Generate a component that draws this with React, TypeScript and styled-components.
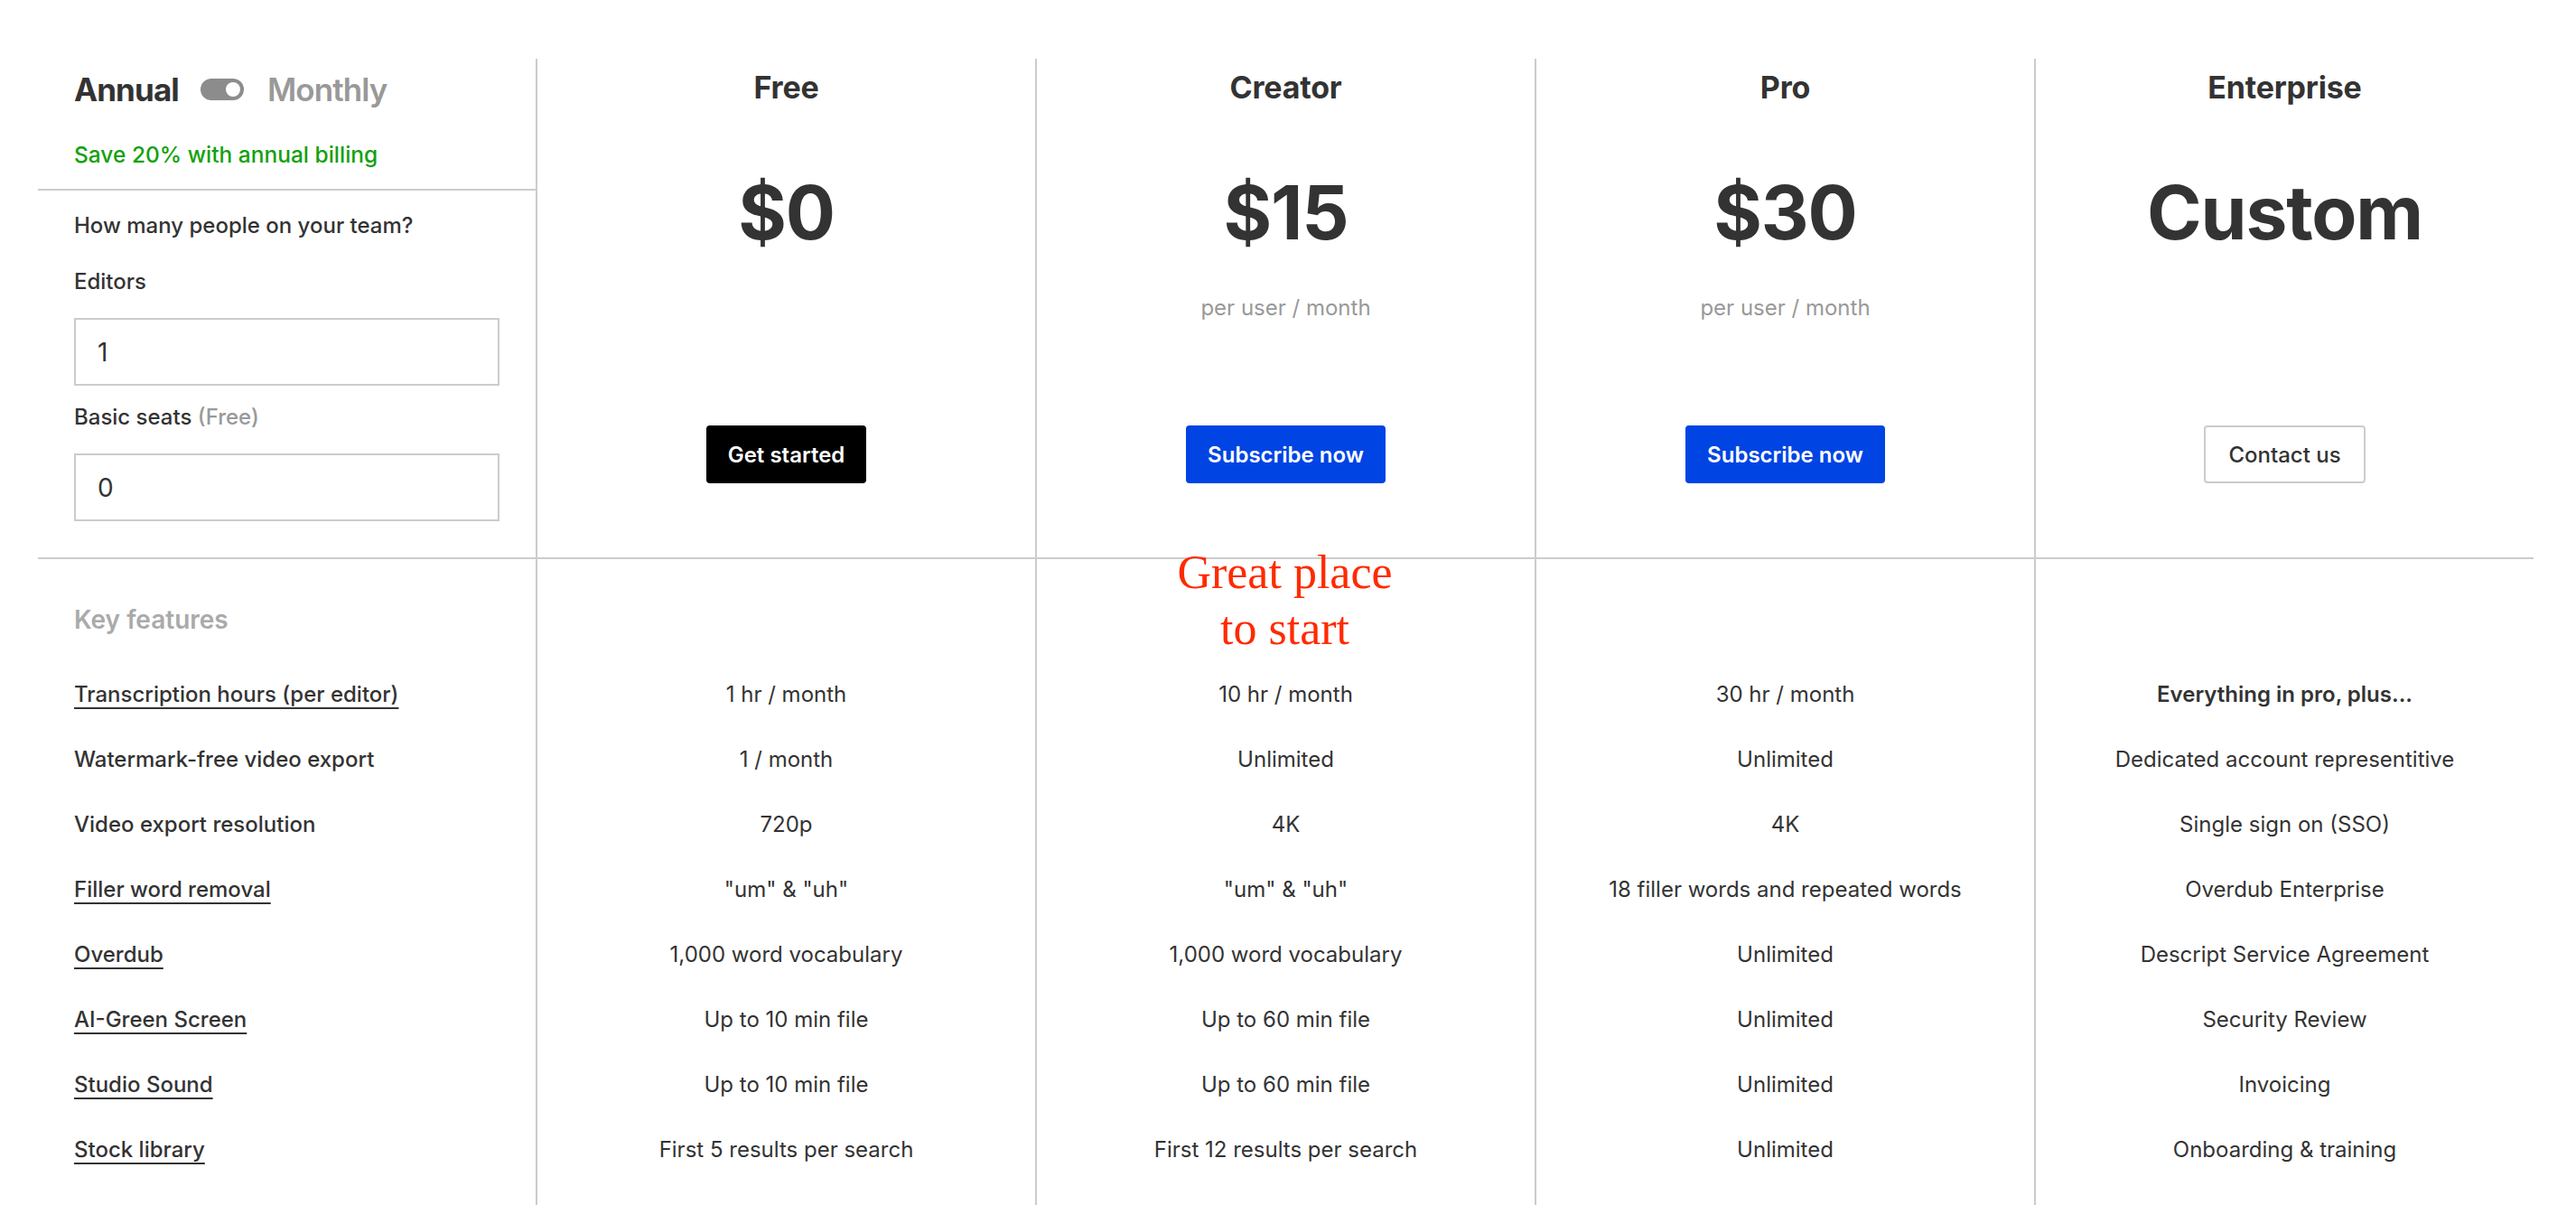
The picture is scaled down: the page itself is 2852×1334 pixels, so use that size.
import React, { useState } from "react";
import styled, { createGlobalStyle } from "styled-components";

const GlobalStyle = createGlobalStyle`
  html, body {
    margin: 0;
    padding: 0;
    background: #fff;
    overflow: hidden;
  }
  body {
    font-family: Inter, "Noto Sans", "Liberation Sans", sans-serif;
    color: #333;
  }
`;

const Page = styled.div`
  padding: 65px 47px 0 42px;
`;

const Table = styled.div`
  display: grid;
  grid-template-columns: 551px repeat(4, 1fr);
`;

// ---- header row ----

const SetupCell = styled.div`
  display: flex;
  flex-direction: column;
  border-bottom: 2px solid #ccc;
`;

const Billing = styled.div`
  padding: 12px 40px 23px;
  border-bottom: 2px solid #ccc;
`;

const BillingSwitch = styled.div`
  display: flex;
  align-items: center;
  gap: 24px;
`;

const Period = styled.span<{ $active?: boolean }>`
  font-size: 35px;
  line-height: 44px;
  font-weight: ${(p) => (p.$active ? 700 : 600)};
  color: ${(p) => (p.$active ? "#333" : "#999")};
  letter-spacing: -0.9px;
`;

const Toggle = styled.button<{ $right: boolean }>`
  position: relative;
  width: 48px;
  height: 24px;
  border: none;
  border-radius: 12px;
  background: #8c8c8c;
  padding: 0;
  margin-right: 2px;
  cursor: pointer;

  &::after {
    content: "";
    position: absolute;
    top: 4px;
    left: ${(p) => (p.$right ? "28px" : "4px")};
    width: 16px;
    height: 16px;
    border-radius: 50%;
    background: #fff;
  }
`;

const SaveNote = styled.div`
  margin-top: 35px;
  font-size: 24.5px;
  line-height: 30px;
  font-weight: 500;
  color: #13a10e;
`;

const Team = styled.div`
  display: flex;
  flex-direction: column;
  padding: 24px 40px 40px;
`;

const Question = styled.div`
  font-size: 24px;
  line-height: 30px;
  font-weight: 500;
  color: #333;
  margin-bottom: 32px;
`;

const FieldLabel = styled.label`
  font-size: 24px;
  line-height: 30px;
  font-weight: 500;
  color: #333;
  margin-bottom: 25px;

  span {
    color: #999;
  }
`;

const SeatInput = styled.input`
  box-sizing: border-box;
  width: 100%;
  height: 75px;
  border: 2px solid #ccc;
  border-radius: 0;
  padding: 0 24px;
  font-family: inherit;
  font-size: 28px;
  color: #333;
  outline: none;
  margin-bottom: 20px;

  &:last-child {
    margin-bottom: 0;
  }
`;

const PlanHead = styled.div`
  display: flex;
  flex-direction: column;
  align-items: center;
  padding: 12px 0 82px;
  border-left: 2px solid #ccc;
  border-bottom: 2px solid #ccc;
`;

const PlanName = styled.h2`
  margin: 0;
  font-size: 34px;
  line-height: 40px;
  font-weight: 700;
  color: #333;
  letter-spacing: -0.2px;
`;

const Price = styled.div`
  margin-top: 71px;
  font-size: 82px;
  line-height: 96px;
  font-weight: 700;
  color: #333;
  letter-spacing: -1.2px;
`;

const PriceNote = styled.div`
  margin-top: 42px;
  height: 30px;
  font-size: 24px;
  line-height: 30px;
  color: #999;
`;

const PlanButton = styled.button<{ $variant: "dark" | "blue" | "outline" }>`
  margin-top: auto;
  height: 64px;
  padding: 0 ${(p) => (p.$variant === "outline" ? "25px" : "24px")};
  border-radius: 4px;
  font-family: inherit;
  font-size: 24px;
  font-weight: ${(p) => (p.$variant === "outline" ? 500 : 600)};
  cursor: pointer;
  border: ${(p) => (p.$variant === "outline" ? "2px solid #ccc" : "none")};
  background: ${(p) =>
    p.$variant === "dark" ? "#000" : p.$variant === "blue" ? "#0044e4" : "#fff"};
  color: ${(p) => (p.$variant === "outline" ? "#333" : "#fff")};
`;

// ---- features ----

const KeyHead = styled.div`
  padding: 50px 40px 29px;
  font-size: 28px;
  line-height: 34px;
  font-weight: 600;
  color: #aaa;
`;

const Cell = styled.div`
  position: relative;
`;

const FeatureLabel = styled.div`
  display: flex;
  align-items: center;
  height: 72px;
  padding: 0 40px;
`;

const FeatureName = styled.span<{ $link?: boolean }>`
  font-size: 24px;
  font-weight: 500;
  color: #333;
  text-decoration: ${(p) => (p.$link ? "underline" : "none")};
  text-decoration-thickness: 2px;
  text-underline-offset: 6px;
`;

const Value = styled.div<{ $strong?: boolean }>`
  display: flex;
  align-items: center;
  justify-content: center;
  height: 72px;
  border-left: 2px solid #ccc;
  font-size: 24px;
  font-weight: ${(p) => (p.$strong ? 600 : 400)};
  color: #333;
`;

const Spacer = styled.div<{ $divider?: boolean; $height: number }>`
  height: ${(p) => p.$height}px;
  border-left: ${(p) => (p.$divider ? "2px solid #ccc" : "none")};
`;

const Callout = styled.div`
  position: absolute;
  top: -16px;
  left: 0;
  right: 0;
  text-align: center;
  font-family: "Liberation Serif", "Times New Roman", serif;
  font-size: 52px;
  line-height: 62px;
  color: #ff2a00;
  pointer-events: none;
`;

type Plan = {
  name: string;
  price: string;
  note?: string;
  cta: string;
  variant: "dark" | "blue" | "outline";
};

const plans: Plan[] = [
  { name: "Free", price: "$0", cta: "Get started", variant: "dark" },
  { name: "Creator", price: "$15", note: "per user / month", cta: "Subscribe now", variant: "blue" },
  { name: "Pro", price: "$30", note: "per user / month", cta: "Subscribe now", variant: "blue" },
  { name: "Enterprise", price: "Custom", cta: "Contact us", variant: "outline" },
];

const features = [
  {
    label: "Transcription hours (per editor)",
    link: true,
    values: ["1 hr / month", "10 hr / month", "30 hr / month", "Everything in pro, plus..."],
  },
  {
    label: "Watermark-free video export",
    link: false,
    values: ["1 / month", "Unlimited", "Unlimited", "Dedicated account representitive"],
  },
  {
    label: "Video export resolution",
    link: false,
    values: ["720p", "4K", "4K", "Single sign on (SSO)"],
  },
  {
    label: "Filler word removal",
    link: true,
    values: ['"um" & "uh"', '"um" & "uh"', "18 filler words and repeated words", "Overdub Enterprise"],
  },
  {
    label: "Overdub",
    link: true,
    values: ["1,000 word vocabulary", "1,000 word vocabulary", "Unlimited", "Descript Service Agreement"],
  },
  {
    label: "AI-Green Screen",
    link: true,
    values: ["Up to 10 min file", "Up to 60 min file", "Unlimited", "Security Review"],
  },
  {
    label: "Studio Sound",
    link: true,
    values: ["Up to 10 min file", "Up to 60 min file", "Unlimited", "Invoicing"],
  },
  {
    label: "Stock library",
    link: true,
    values: ["First 5 results per search", "First 12 results per search", "Unlimited", "Onboarding & training"],
  },
];

function App() {
  const [annual, setAnnual] = useState(true);
  const [editors, setEditors] = useState("1");
  const [basic, setBasic] = useState("0");

  return (
    <Page>
      <GlobalStyle />
      <Table>
        <SetupCell>
          <Billing>
            <BillingSwitch>
              <Period $active={annual}>Annual</Period>
              <Toggle $right={annual} aria-label="billing period" onClick={() => setAnnual(!annual)} />
              <Period $active={!annual}>Monthly</Period>
            </BillingSwitch>
            <SaveNote>Save 20% with annual billing</SaveNote>
          </Billing>
          <Team>
            <Question>How many people on your team?</Question>
            <FieldLabel>Editors</FieldLabel>
            <SeatInput value={editors} onChange={(e) => setEditors(e.target.value)} />
            <FieldLabel>
              Basic seats <span>(Free)</span>
            </FieldLabel>
            <SeatInput value={basic} onChange={(e) => setBasic(e.target.value)} />
          </Team>
        </SetupCell>

        {plans.map((plan) => (
          <PlanHead key={plan.name}>
            <PlanName>{plan.name}</PlanName>
            <Price>{plan.price}</Price>
            <PriceNote>{plan.note}</PriceNote>
            <PlanButton $variant={plan.variant}>{plan.cta}</PlanButton>
          </PlanHead>
        ))}

        <Cell>
          <KeyHead>Key features</KeyHead>
          {features.map((f) => (
            <FeatureLabel key={f.label}>
              <FeatureName $link={f.link}>{f.label}</FeatureName>
            </FeatureLabel>
          ))}
          <Spacer $height={26} />
        </Cell>

        {plans.map((plan, i) => (
          <Cell key={plan.name}>
            <Spacer $divider $height={113} />
            {plan.name === "Creator" && (
              <Callout>
                Great place
                <br />
                to start
              </Callout>
            )}
            {features.map((f) => (
              <Value key={f.label} $strong={f.values[i].startsWith("Everything")}>
                {f.values[i]}
              </Value>
            ))}
            <Spacer $divider $height={26} />
          </Cell>
        ))}
      </Table>
    </Page>
  );
}

export default App;
